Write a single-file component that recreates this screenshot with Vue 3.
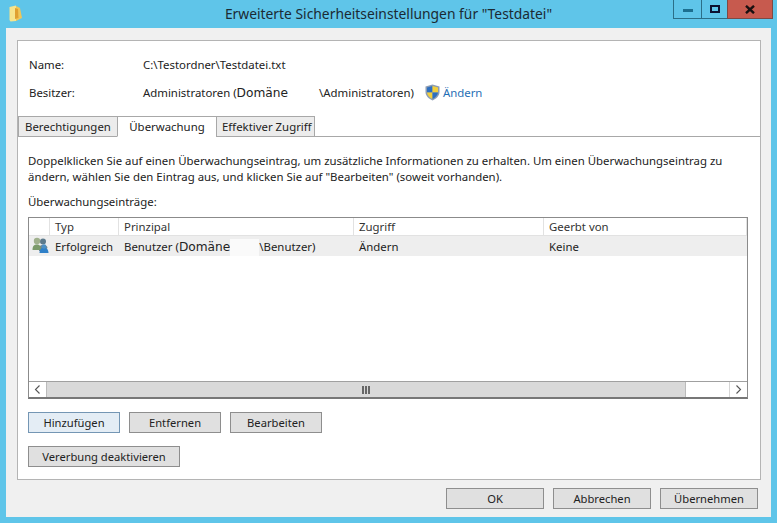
<script setup>
const columns = [
  { label: '', width: 21 },
  { label: 'Typ', width: 69 },
  { label: 'Prinzipal', width: 235 },
  { label: 'Zugriff', width: 190 },
  { label: 'Geerbt von', width: 203 }
]
</script>

<template>
  <div class="win">
    <header class="titlebar">
      <div class="title-left">
        <svg class="folder" width="14" height="17" viewBox="0 0 14 17">
          <path d="M0.500 2 L7 0.500 L7 16 L1.500 16.500 L0.500 15 Z" fill="#f7e48c" />
          <path d="M7 1 L11 3 L13 13 L7 16 Z" fill="#efc65a" />
          <path d="M6 3 L9 4 L9.500 13 L6 14 Z" fill="#e0a030" />
        </svg>
      </div>
      <div class="title">Erweiterte Sicherheitseinstellungen für "Testdatei"</div>
      <div class="title-right">
        <div class="caption cap-min"><span class="min-glyph"></span></div>
        <div class="caption cap-max"><span class="max-glyph"></span></div>
        <div class="caption cap-close">
          <svg width="10" height="9" viewBox="0 0 10 9">
            <path d="M1 0.800 L9 8.200 M9 0.800 L1 8.200" stroke="#1a1010" stroke-width="2.400" fill="none" />
          </svg>
        </div>
      </div>
    </header>

    <main class="client">
      <section class="panel">
        <div class="info">
          <div class="info-row">
            <span class="info-label">Name:</span>
            <span>C:\Testordner\Testdatei.txt</span>
          </div>
          <div class="info-row">
            <span class="info-label">Besitzer:</span>
            <span>Administratoren (<span class="domain">Domäne</span><span class="gap-owner"></span>\Administratoren)</span>
            <svg class="shield" width="15" height="17" viewBox="0 0 15 17">
              <path d="M7.500 0.500 L14.500 2.500 V8 C14.500 12 11 15 7.500 16.500 C4 15 0.500 12 0.500 8 V2.500 Z" fill="#8d9db3" />
              <path d="M7.500 2 V8.500 H2 V3.400 Z" fill="#2d6fc0" />
              <path d="M7.500 2 L13 3.400 V8.500 H7.500 Z" fill="#f2cf3c" />
              <path d="M2 8.500 H7.500 V15 C5 14 2.400 11.800 2 8.500 Z" fill="#f2cf3c" />
              <path d="M7.500 8.500 H13 C12.600 11.800 10 14 7.500 15 Z" fill="#2d6fc0" />
            </svg>
            <span class="link">Ändern</span>
          </div>
        </div>

        <nav class="tabs">
          <div class="tab">Berechtigungen</div>
          <div class="tab tab-active">Überwachung</div>
          <div class="tab">Effektiver Zugriff</div>
        </nav>

        <div class="tab-body">
          <p class="desc">Doppelklicken Sie auf einen Überwachungseintrag, um zusätzliche Informationen zu erhalten. Um einen Überwachungseintrag zu<br>ändern, wählen Sie den Eintrag aus, und klicken Sie auf "Bearbeiten" (soweit vorhanden).</p>
          <div class="list-label">Überwachungseinträge:</div>

          <div class="list">
            <div class="list-head">
              <div v-for="c in columns" :key="c.label" class="head-cell" :style="{ width: c.width + 'px' }">{{ c.label }}</div>
            </div>
            <div class="list-row">
              <div class="row-icon" :style="{ width: columns[0].width + 'px' }">
                <svg width="17" height="17" viewBox="0 0 17 17">
                  <circle cx="11" cy="4.500" r="3" fill="#5c7a8c" />
                  <path d="M7 14 C7 9 8 8 11 8 C14 8 15.500 9 15.500 11 L12 14 Z" fill="#6d8797" />
                  <circle cx="5" cy="4" r="3.200" fill="#9fb08c" />
                  <path d="M0.500 13 C0.500 9 2 7.500 5 7.500 C7.500 7.500 9 9 9 13 Z" fill="#7b9a6a" />
                  <path d="M7.500 16 C7.500 12.500 9.500 10.500 12 10.500 C14.500 10.500 16.500 12.500 16.500 16 Z" fill="#2f80c8" />
                  <circle cx="12" cy="9.500" r="2.300" fill="#4d90c4" />
                </svg>
              </div>
              <div class="cell" :style="{ width: columns[1].width + 'px' }">Erfolgreich</div>
              <div class="cell" :style="{ width: columns[2].width + 'px' }">Benutzer (<span class="domain">Domäne</span><span class="gap-user"></span>\Benutzer)</div>
              <div class="cell" :style="{ width: columns[3].width + 'px' }">Ändern</div>
              <div class="cell" :style="{ width: columns[4].width + 'px' }">Keine</div>
            </div>
            <div class="list-space"></div>
            <div class="scrollbar">
              <div class="sb-btn sb-left">
                <svg width="7" height="9" viewBox="0 0 7 9"><path d="M5.500 0.500 L1.500 4.500 L5.500 8.500" stroke="#555" stroke-width="1.100" fill="none" /></svg>
              </div>
              <div class="sb-thumb">
                <span></span><span></span><span></span>
              </div>
              <div class="sb-track"></div>
              <div class="sb-btn sb-right">
                <svg width="7" height="9" viewBox="0 0 7 9"><path d="M1.500 0.500 L5.500 4.500 L1.500 8.500" stroke="#555" stroke-width="1.100" fill="none" /></svg>
              </div>
            </div>
          </div>

          <div class="btn-row">
            <button class="btn btn-focus">Hinzufügen</button>
            <button class="btn">Entfernen</button>
            <button class="btn">Bearbeiten</button>
          </div>
          <div class="btn-row second">
            <button class="btn btn-wide">Vererbung deaktivieren</button>
          </div>
        </div>
      </section>

      <footer class="footer">
        <button class="btn btn-foot">OK</button>
        <button class="btn btn-foot">Abbrechen</button>
        <button class="btn btn-foot">Übernehmen</button>
      </footer>
    </main>
  </div>
</template>

<style scoped>
.win {
  width: 777px;
  height: 523px;
  background: #5fc5e9;
  display: flex;
  flex-direction: column;
  font-family: "Noto Sans", "Open Sans", sans-serif;
  font-size: 11.4px;
  color: #222;
  overflow: hidden;
}
.titlebar {
  height: 28px;
  flex: none;
  display: grid;
  grid-template-columns: 1fr auto 1fr;
}
.title-left { padding: 5px 0 0 9px; }
.folder { display: block; }
.title {
  font-size: 13.85px;
  color: #1b2a33;
  line-height: 27px;
}
.title-right {
  display: flex;
  justify-content: flex-end;
  align-items: flex-start;
  padding-right: 4px;
}
.caption {
  height: 19px;
  border: 1px solid #2b6f88;
  border-top: 0;
  box-sizing: border-box;
  display: flex;
  align-items: center;
  justify-content: center;
}
.cap-min { width: 28px; border-right: 0; }
.cap-max { width: 26px; border-right: 0; }
.cap-close { width: 46px; background: #c75a4e; border-color: #7d4a45; }
.min-glyph { width: 10px; height: 3px; background: #1c6f90; margin-top: 3px; }
.max-glyph { border: 2px solid #0c1030; width: 6px; height: 4px; }

.client {
  flex: 1;
  margin: 0 6px 6px;
  background: #f0f0f0;
  display: flex;
  flex-direction: column;
  padding: 12px 10px 0 11px;
  min-height: 0;
}
.panel {
  height: 440px;
  flex: none;
  box-sizing: border-box;
  background: #fff;
  border: 1px solid #b4b4b4;
  display: flex;
  flex-direction: column;
}
.info { height: 75px; flex: none; padding: 9px 0 0 11px; box-sizing: border-box; }
.info-row {
  display: flex;
  align-items: center;
  height: 28px;
}
.info-label { width: 114px; flex: none; }
.domain { font-family: "DejaVu Sans", sans-serif; font-size: 12.2px; color: #222; }
.gap-owner { display: inline-block; width: 31px; }
.gap-user {
  display: inline-block;
  width: 29px;
  height: 17px;
  vertical-align: middle;
  background: #fafafa;
}
.shield { margin: 0 3px 0 11px; }
.link { color: #1f6fb5; }

.tabs {
  display: flex;
  height: 21px;
  flex: none;
  margin-bottom: -1px;
  position: relative;
  z-index: 1;
}
.tab {
  width: 99px;
  height: 21px;
  box-sizing: border-box;
  padding: 0 6px;
  line-height: 20px;
  background: #ececec;
  border: 1px solid #a8a8a8;
  border-right: 0;
  white-space: nowrap;
}
.tab:nth-child(2) {
  background: #fff;
  border-bottom-color: #fff;
  text-align: center;
  padding: 0;
}
.tab:nth-child(3) { border-right: 1px solid #a8a8a8; padding: 0 5px; }
.tab-body {
  flex: 1;
  border-top: 1px solid #a8a8a8;
  padding: 16px 12px 0 10px;
  min-height: 0;
}
.desc { margin: 0; line-height: 16px; }
.list-label { margin-top: 9px; line-height: 16px; }
.list {
  margin-top: 7px;
  height: 182px;
  box-sizing: border-box;
  border: 1px solid #8b8b8b;
  border-bottom: 2px solid #777;
  display: flex;
  flex-direction: column;
  background: #fff;
}
.list-head { display: flex; height: 18px; flex: none; }
.head-cell {
  box-sizing: border-box;
  padding-left: 5px;
  line-height: 18px;
  border-right: 1px solid #e2e2e2;
  border-bottom: 1px solid #e2e2e2;
  color: #333;
}
.list-row { display: flex; height: 20px; flex: none; background: #eeeeee; }
.row-icon { padding: 1px 0 0 3px; box-sizing: border-box; }
.row-icon svg { display: block; }
.cell { box-sizing: border-box; padding-left: 5px; line-height: 21px; white-space: nowrap; }
.list-space { flex: 1; }
.scrollbar { display: flex; height: 15px; flex: none; border-top: 1px solid #a0a0a0; }
.sb-btn { width: 17px; display: flex; align-items: center; justify-content: center; flex: none; }
.sb-thumb {
  width: 640px;
  flex: none;
  background: #d9d9d9;
  border-left: 1px solid #bbb;
  border-right: 1px solid #bbb;
  box-sizing: border-box;
  display: flex;
  align-items: center;
  justify-content: center;
  gap: 1px;
}
.sb-thumb span { width: 2px; height: 8px; background: #666; }
.sb-track { flex: 1; }
.sb-right { border-left: 1px solid #d6d6d6; }

.btn-row { display: flex; gap: 9px; margin-top: 13px; }
.btn {
  width: 92px;
  height: 21px;
  box-sizing: border-box;
  padding: 0;
  background: #e0e0e0;
  border: 1px solid #8e8e8e;
  font: inherit;
  font-size: 11.2px;
  color: #222;
  line-height: 18px;
}
.btn-focus { background: #e4edf5; border-color: #7496b4; }
.btn-wide { width: 152px; }
.footer {
  display: flex;
  justify-content: flex-end;
  gap: 9px;
  padding: 8px 3px 0 0;
}
.btn-foot { width: 98px; }
</style>
